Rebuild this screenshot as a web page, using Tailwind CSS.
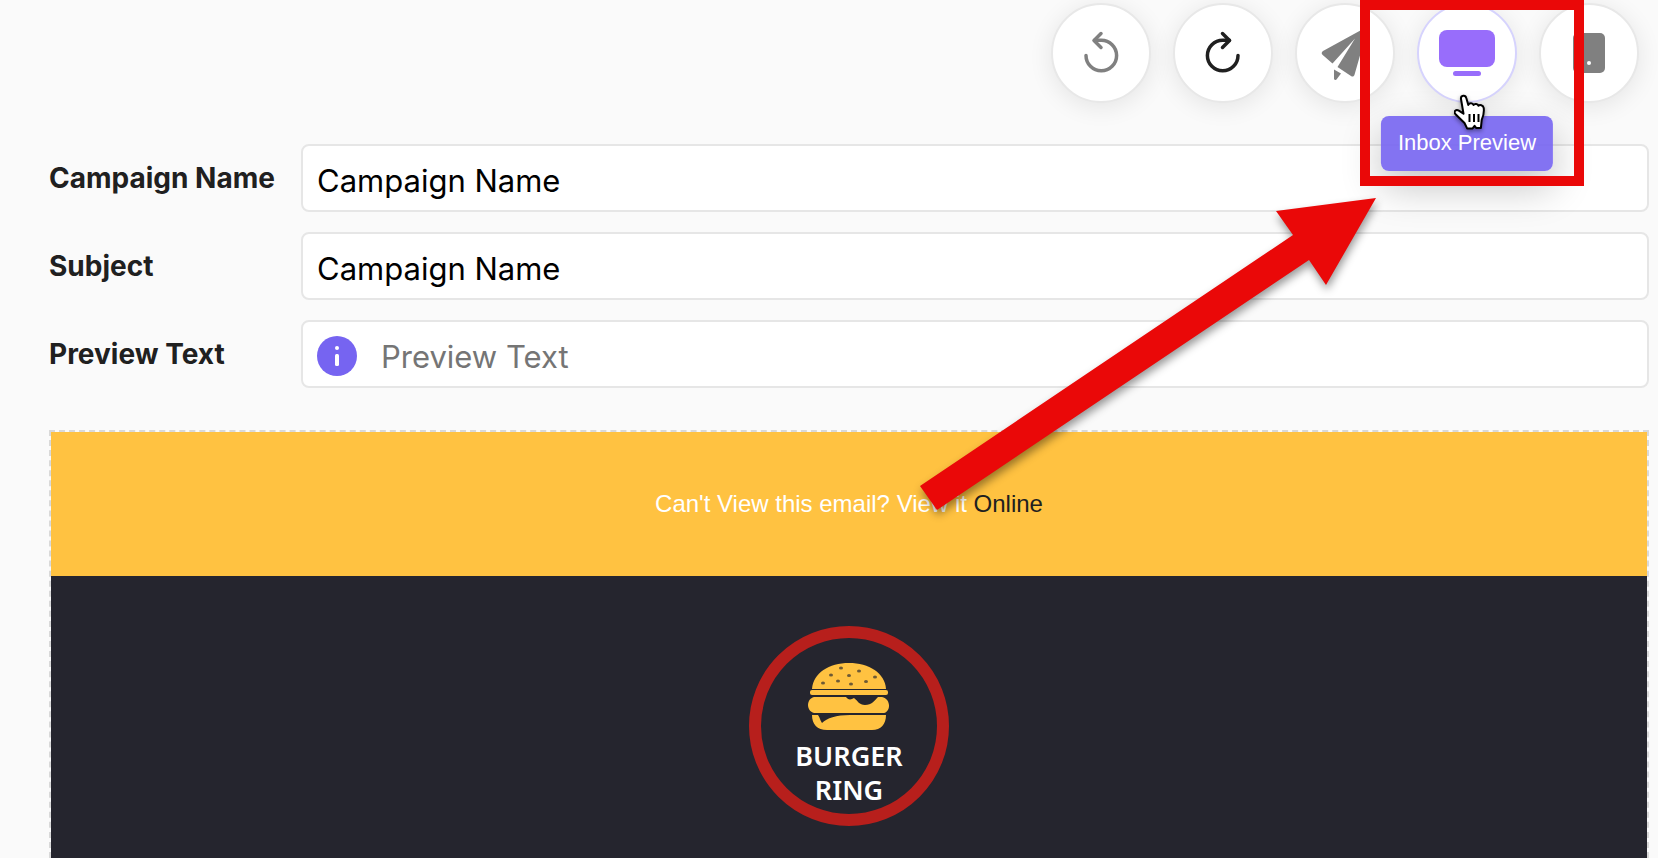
<!doctype html>
<html lang="en">

<head>
    <meta charset="UTF-8">
    <meta name="viewport" content="width=device-width, initial-scale=1.0">
    <script src="https://cdn.jsdelivr.net/npm/@tailwindcss/browser@4"></script>
    <title>Campaign Editor</title>
</head>

<body class="bg-[#fafafa] text-[#202020] font-['Inter',sans-serif]">
    <div class="relative h-screen overflow-hidden flex flex-col">

        <!-- toolbar -->
        <div class="flex justify-end gap-[22px] pt-[3px] pr-[19px]">
            <button type="button" aria-label="Undo" disabled
                class="size-[100px] shrink-0 flex items-center justify-center rounded-full bg-white border-2 border-[#e8e8e8] text-[#808080] shadow-[0_4px_24px_rgba(0,0,0,0.09)]">
                <svg class="size-[48px]" viewBox="0 0 48 48" fill="none" stroke="currentColor" stroke-width="3.500"
                    stroke-linecap="round" stroke-linejoin="round">
                    <path d="M9 26.500a15.300 15.300 0 1 0 15.300-15.300H17.500" />
                    <path d="M24 4.500l-7 7 7 7" />
                </svg>
            </button>
            <button type="button" aria-label="Redo"
                class="size-[100px] shrink-0 flex items-center justify-center rounded-full bg-white border-2 border-[#e8e8e8] text-[#202020] shadow-[0_4px_24px_rgba(0,0,0,0.09)]">
                <svg class="size-[48px]" viewBox="0 0 48 48" fill="none" stroke="currentColor" stroke-width="3.500"
                    stroke-linecap="round" stroke-linejoin="round">
                    <path d="M39 26.500a15.300 15.300 0 1 1-15.300-15.300H30.500" />
                    <path d="M23.500 4.500l7 7-7 7" />
                </svg>
            </button>
            <button type="button" aria-label="Send Test"
                class="size-[100px] shrink-0 flex items-center justify-center rounded-full bg-white border-2 border-[#e8e8e8] text-[#808080] shadow-[0_4px_24px_rgba(0,0,0,0.09)]">
                <svg class="size-[54px]" viewBox="-1 -1 54 54" fill="currentColor">
                    <path d="M45 1.500L4 24c-1.700 1-1.700 3-.3 4L13.500 36.500 36 11.500 18.500 40 32 49c1.500 1 3 .6 3.500-1.200L48 4c.5-2.500-1-3.500-3-2.500z" />
                    <path d="M15 42.500v9c0 1.500 1.500 2 2.500 1l4.500-6z" />
                </svg>
            </button>
            <div class="relative shrink-0">
                <button type="button" aria-label="Inbox Preview"
                    class="size-[100px] flex items-center justify-center rounded-full bg-white border-2 border-[#d6d3fd] text-[#986dfb] shadow-[0_4px_24px_rgba(0,0,0,0.09)]">
                    <svg class="size-[56px]" viewBox="0 0 56 56" fill="currentColor">
                        <rect x="0" y="5" width="56" height="37" rx="8" />
                        <rect x="14" y="46" width="28" height="5" rx="2.500" />
                    </svg>
                </button>
                <div role="tooltip"
                    class="absolute z-10 top-[113px] left-1/2 -translate-x-1/2 px-[17px] pt-3 pb-[13px] rounded-lg bg-[#7664f1]/90 text-white text-[22px] leading-[30px] whitespace-nowrap font-['Liberation_Sans',Arial,sans-serif] shadow-[0_16px_40px_rgba(0,0,0,0.24)]">
                    Inbox Preview</div>
                <svg class="absolute z-20 top-[91px] left-[37px] w-[36px] h-[38px] drop-shadow-[0_2px_2px_rgba(0,0,0,0.4)]"
                    viewBox="0 0 36 38" fill="#fff" stroke="#000" stroke-width="2" stroke-linejoin="round">
                    <path d="M7 5c-.5-4 4.500-4.500 5.300-1l2 7c1-2.500 4.500-2.300 5.200 0 1-1.700 4.300-1.400 4.900.7 1.200-1.200 4.800-.8 5.300 2.200.5 4-.4 8.500-2 12l-.8 8h-4.800l-1.500-2-2 2.500h-5.500L10.500 29 1.300 20c-2-2.500.8-5 3.500-3.300l4.700 3z" />
                    <path d="M15.500 20v8M20 20v8M24.500 20v8" />
                </svg>
            </div>
            <button type="button" aria-label="Mobile Preview"
                class="size-[100px] shrink-0 flex items-center justify-center rounded-full bg-white border-2 border-[#e8e8e8] text-[#808080] shadow-[0_4px_24px_rgba(0,0,0,0.09)]">
                <svg class="size-[40px]" viewBox="0 0 40 40" fill="currentColor">
                    <rect x="4" y="0" width="32" height="40" rx="5" />
                    <circle cx="20" cy="30" r="2" fill="#fff" />
                </svg>
            </button>
        </div>

        <!-- campaign fields -->
        <form class="grid grid-cols-[252px_1fr] gap-y-5 items-center mt-[41px] ml-[49px] mr-[9px]">
            <label for="name" class="text-[28px] leading-9 font-bold">Campaign Name</label>
            <input id="name" type="text" value="Campaign Name"
                class="w-full h-[68px] px-[14px] pt-1 rounded-lg border-2 border-[#e6e6e6] bg-white text-black text-[31px]">

            <label for="subject" class="text-[28px] leading-9 font-bold">Subject</label>
            <input id="subject" type="text" value="Campaign Name"
                class="w-full h-[68px] px-[14px] pt-1 rounded-lg border-2 border-[#e6e6e6] bg-white text-black text-[31px]">

            <label for="preview" class="text-[28px] leading-9 font-bold">Preview Text</label>
            <div class="flex items-center gap-6 h-[68px] px-[14px] pt-1 rounded-lg border-2 border-[#e6e6e6] bg-white">
                <svg class="size-10 shrink-0" viewBox="0 0 40 40">
                    <circle cx="20" cy="20" r="20" fill="#7664f1" />
                    <circle cx="20" cy="12" r="2" fill="#fff" />
                    <rect x="18" y="18" width="4" height="12" rx="1.500" fill="#fff" />
                </svg>
                <input id="preview" type="text" placeholder="Preview Text"
                    class="grow h-full bg-transparent text-[31px] placeholder:text-[#757575]">
            </div>
        </form>

        <!-- email body -->
        <div class="grow flex flex-col mt-[42px] ml-[49px] mr-[9px] border-2 border-b-0 border-dashed border-[#d9d9d9] font-['Liberation_Sans',Arial,sans-serif]">
            <div class="flex items-center justify-center h-[144px] bg-[#ffc241] text-white text-2xl">
                <p>Can't View this email? View it <a href="#" class="text-[#202020]">Online</a></p>
            </div>
            <div class="grow flex justify-center pt-[50px] bg-[#25252e]">
                <div class="size-[200px] flex flex-col items-center rounded-full border-12 border-[#b71f1c] pt-[25px]">
                    <svg class="w-[82px] h-[68px]" viewBox="0 0 82 68" fill="#ffc241">
                        <path d="M4 26C5 10 21 0 41 0s36 10 37 26z" />
                        <rect x="2" y="27" width="78" height="5" rx="2" />
                        <path d="M6 34H38c2 3 5 3 8 1 4 3 5 7 11 7 7 0 9-4 13-8h4c9 2 9 14 2 16H6c-8-2-8-14 0-16z" />
                        <path d="M4 52h6c2 3 2 5 4 8 5-5 14-8 28-8h36c0 9-5 15-14 15H19C9 67 4 61 4 52z" />
                        <g fill="#6e5a35">
                            <ellipse cx="15" cy="20" rx="2" ry="1.500" />
                            <ellipse cx="23" cy="12" rx="2" ry="1.500" />
                            <ellipse cx="33" cy="5" rx="2" ry="1.500" />
                            <ellipse cx="30" cy="18" rx="2" ry="1.500" />
                            <ellipse cx="41" cy="12.500" rx="2" ry="1.500" />
                            <ellipse cx="43" cy="21" rx="2" ry="1.500" />
                            <ellipse cx="51" cy="8" rx="2" ry="1.500" />
                            <ellipse cx="58" cy="18.500" rx="2" ry="1.500" />
                            <ellipse cx="67" cy="14" rx="2" ry="1.500" />
                        </g>
                    </svg>
                    <p class="mt-2 text-center text-white text-[27px] leading-[34px] font-semibold font-['Noto_Sans',sans-serif]">BURGER<br>RING</p>
                </div>
            </div>
        </div>

        <!-- callout box and arrow -->
        <div class="absolute z-30 top-0 right-[74px] w-[224px] h-[186px] border-10 border-[#ea0808] pointer-events-none"></div>
        <svg class="absolute z-30 top-[198px] right-[282px] w-[456px] h-[312px] overflow-visible pointer-events-none drop-shadow-[1px_5px_4px_rgba(0,0,0,0.4)]"
            viewBox="0 0 456 312" fill="#ea0808">
            <path d="M456 0L356 13l17 24L0 288l17 24L389 62l17 25z" />
        </svg>
    </div>
</body>

</html>
